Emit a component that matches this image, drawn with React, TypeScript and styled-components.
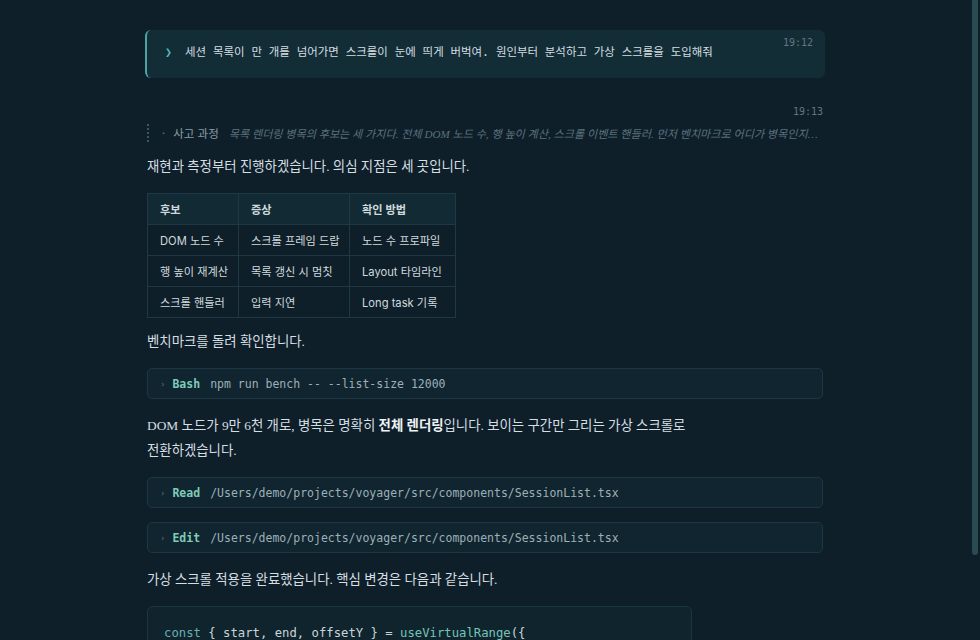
import React from "react";
import styled, { createGlobalStyle } from "styled-components";

const Global = createGlobalStyle`
  html, body { margin: 0; padding: 0; height: 100%; background: #0e1f2a; overflow: hidden; }
  #root { height: 100%; }
  * { box-sizing: border-box; }
`;

const MONO = `"DejaVu Sans Mono", "Noto Sans CJK KR", monospace`;
const SERIF = `"Liberation Serif", "Noto Sans CJK KR", serif`;
const SANS = `Inter, "Noto Sans CJK KR", sans-serif`;

const Page = styled.div`
  height: 100vh;
  display: flex;
  background: #0e1f2a;
  overflow: hidden;
`;

const Viewport = styled.div`
  flex: 1;
  min-width: 0;
  overflow: hidden;
`;

const ScrollTrack = styled.div`
  flex: none;
  width: 10px;
  padding: 0 2px;
  background: #0e1f2a;
`;

const ScrollThumb = styled.div`
  height: 555px;
  background: #2a4b53;
  border-radius: 0 0 3px 3px;
`;

const Column = styled.main`
  max-width: 680px;
  margin: 0 auto;
  padding: 30px 0 22px;
  display: flex;
  flex-direction: column;
`;

const UserMsg = styled.section`
  display: flex;
  align-items: flex-start;
  background: #132d37;
  border-left: 2px solid #4aa4a8;
  border-radius: 6px;
  padding: 12px 12px 16px 18px;
  min-height: 48px;
`;

const Chevron = styled.span`
  font-family: ${MONO};
  color: #58b6b8;
  font-size: 11.5px;
  line-height: 20px;
  width: 20px;
  flex: none;
`;

const UserText = styled.p`
  margin: 0;
  flex: 1;
  font-family: ${MONO};
  font-size: 11.45px;
  line-height: 20px;
  color: #d3dde0;
`;

const Time = styled.span`
  font-family: ${MONO};
  font-size: 10px;
  line-height: 14px;
  color: #62767f;
  flex: none;
`;

const UserTime = styled(Time)`
  margin-top: -6px;
`;

const Assistant = styled.section`
  margin-top: 27px;
  padding: 0 2px;
  display: flex;
  flex-direction: column;
`;

const MetaRow = styled.div`
  display: flex;
  justify-content: flex-end;
`;

const Thinking = styled.div`
  margin-top: 5px;
  display: flex;
  align-items: center;
  height: 18px;
  border-left: 2px dotted #3a5660;
  padding-left: 13px;
  gap: 8px;
  min-width: 0;
  padding-right: 4px;
`;

const Dot = styled.span`
  color: #6c808a;
  font-family: ${SANS};
  font-size: 11px;
  flex: none;
`;

const ThinkLabel = styled.span`
  font-family: ${SANS};
  font-size: 11.5px;
  color: #8a9ca4;
  flex: none;
  margin-right: 2px;
`;

const ThinkText = styled.span`
  font-family: ${SERIF};
  font-style: italic;
  font-size: 11.1px;
  color: #5b727d;
  white-space: nowrap;
  overflow: hidden;
  text-overflow: ellipsis;
  min-width: 0;
  flex: 1;
`;

const Body = styled.div`
  margin-top: 12px;
  display: flex;
  flex-direction: column;
  align-items: flex-start;
  gap: 14px;
`;

const Prose = styled.p`
  margin: 0;
  max-width: 550px;
  font-family: ${SERIF};
  font-size: 13.4px;
  line-height: 25px;
  color: #d5dee1;
  word-break: keep-all;
  strong { font-weight: 700; color: #eef3f4; }
`;

const Table = styled.table`
  width: 308px;
  border-collapse: collapse;
  table-layout: fixed;
  font-family: ${SANS};
  font-size: 11.2px;
  color: #d0dadd;
  margin-bottom: -3px;
`;

const Th = styled.th<{ $w: number }>`
  width: ${(p) => p.$w}px;
  height: 31px;
  padding: 0 12px;
  text-align: left;
  font-weight: 600;
  background: #122a34;
  border: 1px solid #1f3944;
`;

const Td = styled.td`
  height: 31px;
  padding: 0 12px;
  border: 1px solid #1f3944;
  white-space: nowrap;
`;

const Tool = styled.div`
  align-self: stretch;
  display: flex;
  align-items: center;
  height: 31px;
  padding: 0 12px;
  background: #10252f;
  border: 1px solid #1c3842;
  border-radius: 5px;
  font-family: ${MONO};
  font-size: 11.5px;
  gap: 7px;
`;

const ToolDot = styled.span`
  color: #58707a;
  font-size: 9px;
`;

const ToolName = styled.span`
  color: #7fcab9;
  font-weight: 700;
  margin-right: 3px;
`;

const ToolArg = styled.span`
  color: #9db0b7;
`;

const Code = styled.pre`
  margin: 0;
  width: 545px;
  padding: 16px;
  background: #10242e;
  border: 1px solid #1c3640;
  border-radius: 6px;
  font-family: ${MONO};
  font-size: 12.25px;
  line-height: 20px;
  color: #c9d5d8;
`;

const Kw = styled.span`
  color: #69aeb4;
`;

const Fn = styled.span`
  color: #74c4ba;
`;

const rows = [
  ["DOM 노드 수", "스크롤 프레임 드랍", "노드 수 프로파일"],
  ["행 높이 재계산", "목록 갱신 시 멈칫", "Layout 타임라인"],
  ["스크롤 핸들러", "입력 지연", "Long task 기록"],
];

const tools = [
  ["Bash", "npm run bench -- --list-size 12000"],
  ["Read", "/Users/demo/projects/voyager/src/components/SessionList.tsx"],
  ["Edit", "/Users/demo/projects/voyager/src/components/SessionList.tsx"],
];

function ToolLine({ name, arg }: { name: string; arg: string }) {
  return (
    <Tool>
      <ToolDot>›</ToolDot>
      <ToolName>{name}</ToolName>
      <ToolArg>{arg}</ToolArg>
    </Tool>
  );
}

export default function App() {
  return (
    <>
      <Global />
      <Page>
        <Viewport>
          <Column>
            <UserMsg>
              <Chevron>❯</Chevron>
              <UserText>
                세션 목록이 만 개를 넘어가면 스크롤이 눈에 띄게 버벅여. 원인부터 분석하고 가상 스크롤을 도입해줘
              </UserText>
              <UserTime>19:12</UserTime>
            </UserMsg>

            <Assistant>
              <MetaRow>
                <Time>19:13</Time>
              </MetaRow>
              <Thinking>
                <Dot>·</Dot>
                <ThinkLabel>사고 과정</ThinkLabel>
                <ThinkText>
                  목록 렌더링 병목의 후보는 세 가지다. 전체 DOM 노드 수, 행 높이 계산, 스크롤 이벤트 핸들러. 먼저 벤치마크로 어디가 병목인지 확인하고 나서 가상 스크롤을 적용한다.
                </ThinkText>
              </Thinking>

              <Body>
                <Prose>재현과 측정부터 진행하겠습니다. 의심 지점은 세 곳입니다.</Prose>
                <Table>
                  <thead>
                    <tr>
                      <Th $w={91}>후보</Th>
                      <Th $w={111}>증상</Th>
                      <Th $w={106}>확인 방법</Th>
                    </tr>
                  </thead>
                  <tbody>
                    {rows.map((r) => (
                      <tr key={r[0]}>
                        {r.map((c) => (
                          <Td key={c}>{c}</Td>
                        ))}
                      </tr>
                    ))}
                  </tbody>
                </Table>
                <Prose>벤치마크를 돌려 확인합니다.</Prose>
                <ToolLine name={tools[0][0]} arg={tools[0][1]} />
                <Prose>
                  DOM 노드가 9만 6천 개로, 병목은 명확히 <strong>전체 렌더링</strong>입니다. 보이는 구간만 그리는 가상 스크롤로 전환하겠습니다.
                </Prose>
                <ToolLine name={tools[1][0]} arg={tools[1][1]} />
                <ToolLine name={tools[2][0]} arg={tools[2][1]} />
                <Prose>가상 스크롤 적용을 완료했습니다. 핵심 변경은 다음과 같습니다.</Prose>
                <Code>
                  <Kw>const</Kw> {"{ start, end, offsetY } = "}
                  <Fn>useVirtualRange</Fn>
                  {"({\n  count: sessions.length,\n  rowHeight: 44,\n});"}
                </Code>
              </Body>
            </Assistant>
          </Column>
        </Viewport>
        <ScrollTrack aria-hidden="true">
          <ScrollThumb />
        </ScrollTrack>
      </Page>
    </>
  );
}
